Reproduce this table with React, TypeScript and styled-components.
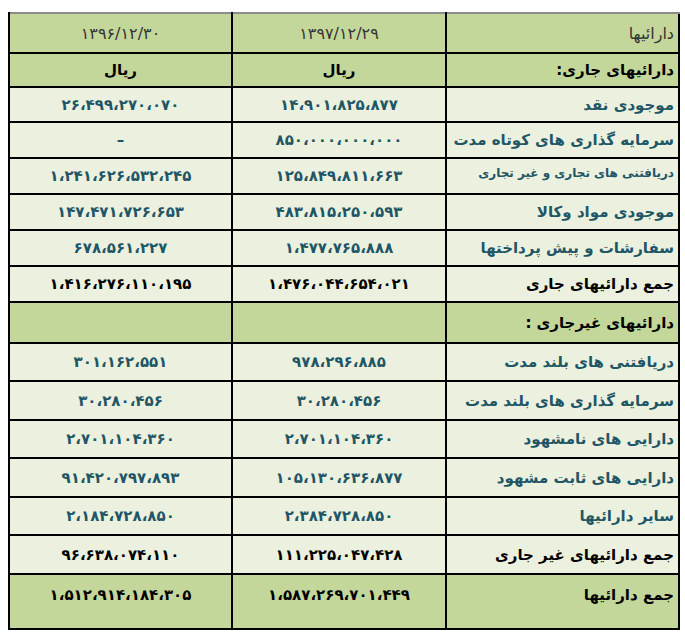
import * as React from 'react'
import styled, { createGlobalStyle } from 'styled-components'

const GlobalStyle = createGlobalStyle`
  html, body {
    margin: 0;
    padding: 0;
    background: #ffffff;
  }
  body {
    font-family: "DejaVu Sans", "Noto Sans", sans-serif;
  }
`

const Page = styled.div`
  padding: 12px 0 0 8px;
`

const StyledTable = styled.table`
  border-collapse: collapse;
  direction: rtl;
  width: 670px;
  table-layout: fixed;
  border-top: 2px solid #8c8c8c;
  border-bottom: 2px solid #000;
  border-left: 2px solid #000;
  border-right: 2px solid #000;
`

const Tr = styled.tr<{ $bg: 'head' | 'light'; $h: number }>`
  background-color: ${({ $bg }) => ($bg === 'head' ? '#c4d79b' : '#ebf1de')};
  height: ${({ $h }) => $h}px;
  border-top: 2px solid #000;
  &:first-child {
    border-top: none;
  }
`

const Td = styled.td<{ $tone?: 'data' | 'total' | 'date'; $label?: boolean; $small?: boolean; $top?: boolean }>`
  border-left: 2px solid #000;
  padding: ${({ $top, $small }) => ($top ? '11px 4px 0' : $small ? '0 4px 6px' : '0 4px')};
  vertical-align: ${({ $top }) => ($top ? 'top' : 'middle')};
  text-align: ${({ $label }) => ($label ? 'right' : 'center')};
  font-size: ${({ $small, $tone }) => ($small ? '12px' : $tone === 'date' ? '16px' : '15px')};
  font-weight: ${({ $tone }) => ($tone === 'date' ? 400 : 700)};
  color: ${({ $tone }) =>
    $tone === 'data' ? '#1f5666' : $tone === 'date' ? '#333333' : '#000'};
  white-space: nowrap;
  &:last-child {
    border-left: none;
  }
`

const Header = styled(Td)`
  font-weight: 400;
`

const fa = (s: string) =>
  s.replace(/\d/g, d => '۰۱۲۳۴۵۶۷۸۹'[Number(d)]).replace(/,/g, '،')

interface Row {
  label: string;
  now?: string;
  prev?: string;
  tone: 'data' | 'total';
  bg: 'head' | 'light';
  h: number;
  small?: boolean;
  top?: boolean;
}

const rows: Row[] = [
  { label: 'موجودی نقد', now: '14,901,825,877', prev: '26,499,270,070', tone: 'data', bg: 'light', h: 35 },
  { label: 'سرمایه گذاری های کوتاه مدت', now: '850,000,000,000', prev: '–', tone: 'data', bg: 'light', h: 36 },
  { label: 'دریافتنی های تجاری و غیر تجاری', now: '125,849,811,663', prev: '1,241,626,532,245', tone: 'data', bg: 'light', h: 36, small: true },
  { label: 'موجودی مواد وکالا', now: '483,815,250,593', prev: '147,471,726,653', tone: 'data', bg: 'light', h: 36 },
  { label: 'سفارشات و پیش پرداختها', now: '1,477,765,888', prev: '678,561,227', tone: 'data', bg: 'light', h: 36 },
  { label: 'جمع دارائیهای جاری', now: '1,476,044,654,021', prev: '1,416,276,110,195', tone: 'total', bg: 'light', h: 36 },
  { label: 'دارائیهای غیرجاری :', tone: 'total', bg: 'head', h: 41 },
  { label: 'دریافتنی های بلند مدت', now: '978,296,885', prev: '301,162,551', tone: 'data', bg: 'light', h: 38 },
  { label: 'سرمایه گذاری های بلند مدت', now: '30,280,456', prev: '30,280,456', tone: 'data', bg: 'light', h: 39 },
  { label: 'دارایی های نامشهود', now: '2,701,104,360', prev: '2,701,104,360', tone: 'data', bg: 'light', h: 38 },
  { label: 'دارایی های ثابت مشهود', now: '105,130,636,877', prev: '91,420,797,893', tone: 'data', bg: 'light', h: 39 },
  { label: 'سایر دارائیها', now: '2,384,728,850', prev: '2,184,728,850', tone: 'data', bg: 'light', h: 38 },
  { label: 'جمع دارائیهای غیر جاری', now: '111,225,047,428', prev: '96,638,074,110', tone: 'total', bg: 'light', h: 39 },
  { label: 'جمع دارائیها', now: '1,587,269,701,449', prev: '1,512,914,184,305', tone: 'total', bg: 'head', h: 55, top: true },
]

export default function App () {
  const bodyRows = rows.map((r, i) => (
    <Tr $bg={r.bg} $h={r.h} key={i}>
      <Td $label $tone={r.tone} $small={r.small} $top={r.top}>{r.label}</Td>
      <Td $tone={r.tone} $top={r.top}>{r.now ? fa(r.now) : ''}</Td>
      <Td $tone={r.tone} $top={r.top}>{r.prev ? fa(r.prev) : ''}</Td>
    </Tr>
  ))

  return (
    <Page>
      <GlobalStyle />
      <StyledTable>
        <colgroup>
          <col style={{ width: 233 }} />
          <col style={{ width: 214 }} />
          <col style={{ width: 223 }} />
        </colgroup>
        <tbody>
          <Tr $bg='head' $h={40}>
            <Header $label $tone='date'>دارائیها</Header>
            <Header $tone='date'>{fa('1397/12/29')}</Header>
            <Header $tone='date'>{fa('1396/12/30')}</Header>
          </Tr>
          <Tr $bg='head' $h={34}>
            <Td $label $tone='total'>دارائیهای جاری:</Td>
            <Td $tone='total'>ریال</Td>
            <Td $tone='total'>ریال</Td>
          </Tr>
          {bodyRows}
        </tbody>
      </StyledTable>
    </Page>
  )
}
